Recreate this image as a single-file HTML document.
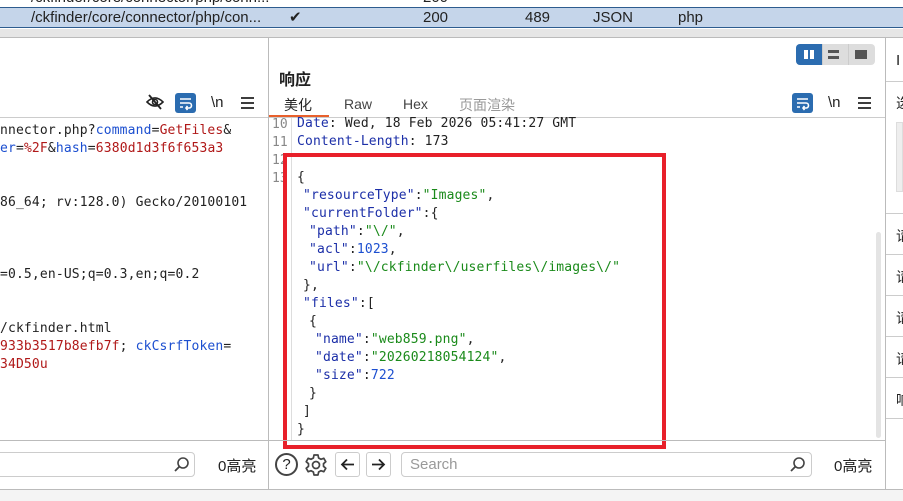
<!DOCTYPE html>
<html><head><meta charset="utf-8"><style>
*{margin:0;padding:0;box-sizing:border-box}
body{width:903px;height:501px;overflow:hidden;background:#fff;font-family:"Liberation Sans","Noto Sans CJK SC",sans-serif;position:relative;color:#222}
.a{position:absolute}
.mono{font-family:"DejaVu Sans Mono","Liberation Mono",monospace;font-size:13px;letter-spacing:0.15px;white-space:pre;line-height:18px}
.code{white-space:normal}
.code div{height:18px;white-space:pre}
.k{color:#1c2fa8}.r{color:#b01818}.g{color:#1a8a1a}.b{color:#1c4fd0}
.ln{color:#888;font-family:"DejaVu Sans Mono",monospace;font-size:13px;line-height:18px}
</style></head><body>
<!-- top table -->
<div class="a" style="left:0;top:0;width:903px;height:8px;background:#fff;border-bottom:1px solid #2d5c8f"></div>
<div class="a" style="left:31px;top:-11px;font-size:15px;color:#222">/ckfinder/core/connector/php/conn...</div>
<div class="a" style="left:423px;top:-11px;font-size:15px">200</div>
<div class="a" style="left:0;top:8px;width:903px;height:20px;background:#c5d5ea;border-bottom:1px solid #2d5c8f"></div>
<div class="a" style="left:31px;top:8px;font-size:15px;line-height:20px">/ckfinder/core/connector/php/con...</div>
<div class="a" style="left:289px;top:8px;font-size:15px;line-height:20px">✔</div>
<div class="a" style="left:423px;top:8px;font-size:15px;line-height:20px">200</div>
<div class="a" style="left:525px;top:8px;font-size:15px;line-height:20px">489</div>
<div class="a" style="left:593px;top:8px;font-size:15px;line-height:20px">JSON</div>
<div class="a" style="left:678px;top:8px;font-size:15px;line-height:20px">php</div>
<div class="a" style="left:0;top:29px;width:903px;height:8px;background:#e6e6e6"></div>
<div class="a" style="left:0;top:37px;width:903px;height:1px;background:#bbb"></div>
<!-- vertical dividers -->
<div class="a" style="left:268px;top:38px;width:1px;height:452px;background:#bbb"></div>
<div class="a" style="left:885px;top:38px;width:1px;height:452px;background:#bbb"></div>
<!-- left toolbar -->
<svg class="a" style="left:146px;top:94px" width="18" height="16" viewBox="0 0 18 16"><path d="M1 8 Q9 0 17 8 Q9 16 1 8Z" fill="none" stroke="#222" stroke-width="1.6"/><circle cx="9" cy="8" r="2.5" fill="none" stroke="#222" stroke-width="1.6"/><path d="M3 1 L15 15" stroke="#222" stroke-width="1.8"/></svg>
<svg class="a" style="left:175px;top:93px" width="21" height="20" viewBox="0 0 21 20"><rect width="21" height="20" rx="3" fill="#2b6cb0"/><path d="M5 6H16M5 10H14a2.5 2.5 0 0 1 0 5H11M12.5 13L11 15L12.5 17M5 14H8" fill="none" stroke="#fff" stroke-width="1.6"/></svg>
<div class="a" style="left:211px;top:94px;font-size:15px">\n</div>
<svg class="a" style="left:241px;top:97px" width="13" height="12"><path d="M0 1H13M0 6H13M0 11H13" stroke="#222" stroke-width="1.8"/></svg>
<div class="a" style="left:0;top:117px;width:268px;height:1px;background:#ccc"></div>
<div class="a mono" style="left:0;top:122px">nnector.php?<span class="b">command</span>=<span class="r">GetFiles</span>&amp;
<span class="b">er</span>=<span class="r">%2F</span>&amp;<span class="b">hash</span>=<span class="r">6380d1d3f6f653a3</span>


86_64; rv:128.0) Gecko/20100101



=0.5,en-US;q=0.3,en;q=0.2


/ckfinder.html
<span class="r">933b3517b8efb7f</span>; <span class="b">ckCsrfToken</span>=
<span class="r">34D50u</span></div>
<!-- left bottom -->
<div class="a" style="left:0;top:440px;width:268px;height:1px;background:#bbb"></div>
<div class="a" style="left:-5px;top:452px;width:200px;height:25px;border:1px solid #ccc;border-radius:4px"></div>
<svg class="a" style="left:173px;top:456px" width="17" height="17"><circle cx="10" cy="7" r="5" fill="none" stroke="#444" stroke-width="1.6"/><path d="M6.5 10.5L2 15" stroke="#444" stroke-width="1.8"/></svg>
<div class="a" style="left:218px;top:455px;font-size:15px">0高亮</div>
<!-- response header -->
<div class="a" style="left:279px;top:66px;font-size:16px;font-weight:bold">响应</div>
<div class="a" style="left:796px;top:44px;width:79px;height:21px;background:#ddd;border-radius:4px"></div>
<div class="a" style="left:796px;top:44px;width:26px;height:21px;background:#2b6cb0;border-radius:4px 0 0 4px"></div>
<div class="a" style="left:804px;top:50px;width:4px;height:9px;background:#fff"></div>
<div class="a" style="left:810px;top:50px;width:4px;height:9px;background:#fff"></div>
<div class="a" style="left:822px;top:44px;width:1px;height:21px;background:#ccc"></div>
<div class="a" style="left:848px;top:44px;width:1px;height:21px;background:#ccc"></div>
<div class="a" style="left:828px;top:50px;width:11px;height:3px;background:#555"></div>
<div class="a" style="left:828px;top:56px;width:11px;height:3px;background:#555"></div>
<div class="a" style="left:855px;top:50px;width:12px;height:9px;background:#555"></div>
<div class="a" style="left:284px;top:95px;font-size:14px">美化</div>
<div class="a" style="left:269px;top:115px;width:60px;height:2px;background:#e8602c"></div>
<div class="a" style="left:344px;top:96px;font-size:14px;color:#444">Raw</div>
<div class="a" style="left:403px;top:96px;font-size:14px;color:#444">Hex</div>
<div class="a" style="left:459px;top:95px;font-size:14px;color:#999">页面渲染</div>
<svg class="a" style="left:792px;top:93px" width="21" height="20" viewBox="0 0 21 20"><rect width="21" height="20" rx="3" fill="#2b6cb0"/><path d="M5 6H16M5 10H14a2.5 2.5 0 0 1 0 5H11M12.5 13L11 15L12.5 17M5 14H8" fill="none" stroke="#fff" stroke-width="1.6"/></svg>
<div class="a" style="left:828px;top:94px;font-size:15px">\n</div>
<svg class="a" style="left:858px;top:97px" width="13" height="12"><path d="M0 1H13M0 6H13M0 11H13" stroke="#222" stroke-width="1.8"/></svg>
<div class="a" style="left:269px;top:117px;width:616px;height:1px;background:#ccc"></div>
<!-- code -->
<div class="a" style="left:291px;top:118px;width:1px;height:322px;background:#ddd"></div>
<div class="a ln" style="left:272px;top:116px;white-space:pre">10
11
12
13</div>
<div class="a mono code" style="left:297px;top:115px"><div><span class="k">Date</span>: Wed, 18 Feb 2026 05:41:27 GMT</div><div><span class="k">Content-Length</span>: 173</div><div></div><div>{</div><div style="padding-left:6px"><span class="k">"resourceType"</span>:<span class="g">"Images"</span>,</div><div style="padding-left:6px"><span class="k">"currentFolder"</span>:{</div><div style="padding-left:12px"><span class="k">"path"</span>:<span class="g">"\/"</span>,</div><div style="padding-left:12px"><span class="k">"acl"</span>:<span class="b">1023</span>,</div><div style="padding-left:12px"><span class="k">"url"</span>:<span class="g">"\/ckfinder\/userfiles\/images\/"</span></div><div style="padding-left:6px">},</div><div style="padding-left:6px"><span class="k">"files"</span>:[</div><div style="padding-left:12px">{</div><div style="padding-left:18px"><span class="k">"name"</span>:<span class="g">"web859.png"</span>,</div><div style="padding-left:18px"><span class="k">"date"</span>:<span class="g">"20260218054124"</span>,</div><div style="padding-left:18px"><span class="k">"size"</span>:<span class="b">722</span></div><div style="padding-left:12px">}</div><div style="padding-left:6px">]</div><div>}</div></div>
<div class="a" style="left:283px;top:153px;width:383px;height:296px;border:4px solid #e8202a"></div>
<div class="a" style="left:876px;top:232px;width:5px;height:206px;background:#e4e4e4;border-radius:3px"></div>
<!-- response bottom -->
<div class="a" style="left:269px;top:440px;width:616px;height:1px;background:#bbb"></div>
<div class="a" style="left:275px;top:453px;width:23px;height:23px;border:2px solid #444;border-radius:50%;font-size:15px;text-align:center;line-height:19px">?</div>
<svg class="a" style="left:304px;top:453px" width="24" height="24" viewBox="0 0 24 24"><path d="M10 2h4l.6 3 2.3 1.3 2.9-1 2 3.4-2.3 2v2.6l2.3 2-2 3.4-2.9-1-2.3 1.3-.6 3h-4l-.6-3-2.3-1.3-2.9 1-2-3.4 2.3-2v-2.6l-2.3-2 2-3.4 2.9 1L9.4 5z" fill="none" stroke="#444" stroke-width="1.7" stroke-linejoin="round"/><circle cx="12" cy="12" r="3.5" fill="none" stroke="#444" stroke-width="1.7"/></svg>
<div class="a" style="left:335px;top:452px;width:25px;height:25px;border:1px solid #ccc;border-radius:3px"></div>
<svg class="a" style="left:340px;top:457px" width="15" height="15"><path d="M14 7.5H2M7 2.5L2 7.5L7 12.5" fill="none" stroke="#222" stroke-width="1.8"/></svg>
<div class="a" style="left:366px;top:452px;width:25px;height:25px;border:1px solid #ccc;border-radius:3px"></div>
<svg class="a" style="left:371px;top:457px" width="15" height="15"><path d="M1 7.5H13M8 2.5L13 7.5L8 12.5" fill="none" stroke="#222" stroke-width="1.8"/></svg>
<div class="a" style="left:401px;top:452px;width:411px;height:25px;border:1px solid #ccc;border-radius:4px;padding-left:8px;font-size:15px;color:#999;line-height:23px">Search</div>
<svg class="a" style="left:789px;top:456px" width="17" height="17"><circle cx="10" cy="7" r="5" fill="none" stroke="#444" stroke-width="1.6"/><path d="M6.5 10.5L2 15" stroke="#444" stroke-width="1.8"/></svg>
<div class="a" style="left:834px;top:455px;font-size:15px">0高亮</div>
<!-- right inspector -->
<div class="a" style="left:896px;top:52px;font-size:15px">I</div>
<div class="a" style="left:886px;top:81px;width:17px;height:1px;background:#ccc"></div>
<div class="a" style="left:896px;top:93px;font-size:14px">选</div>
<div class="a" style="left:896px;top:122px;width:7px;height:70px;background:#eee;border:1px solid #ddd"></div>
<div class="a" style="left:886px;top:213px;width:17px;height:1px;background:#ccc"></div>
<div class="a" style="left:896px;top:226px;font-size:14px">请</div>
<div class="a" style="left:886px;top:254px;width:17px;height:1px;background:#ccc"></div>
<div class="a" style="left:896px;top:267px;font-size:14px">请</div>
<div class="a" style="left:886px;top:295px;width:17px;height:1px;background:#ccc"></div>
<div class="a" style="left:896px;top:308px;font-size:14px">请</div>
<div class="a" style="left:886px;top:336px;width:17px;height:1px;background:#ccc"></div>
<div class="a" style="left:896px;top:349px;font-size:14px">请</div>
<div class="a" style="left:886px;top:377px;width:17px;height:1px;background:#ccc"></div>
<div class="a" style="left:896px;top:390px;font-size:14px">响</div>
<div class="a" style="left:886px;top:418px;width:17px;height:1px;background:#ccc"></div>
<!-- bottom strip -->
<div class="a" style="left:0;top:489px;width:903px;height:1px;background:#bbb"></div>
<div class="a" style="left:0;top:490px;width:903px;height:11px;background:#f4f4f4"></div>
</body></html>
